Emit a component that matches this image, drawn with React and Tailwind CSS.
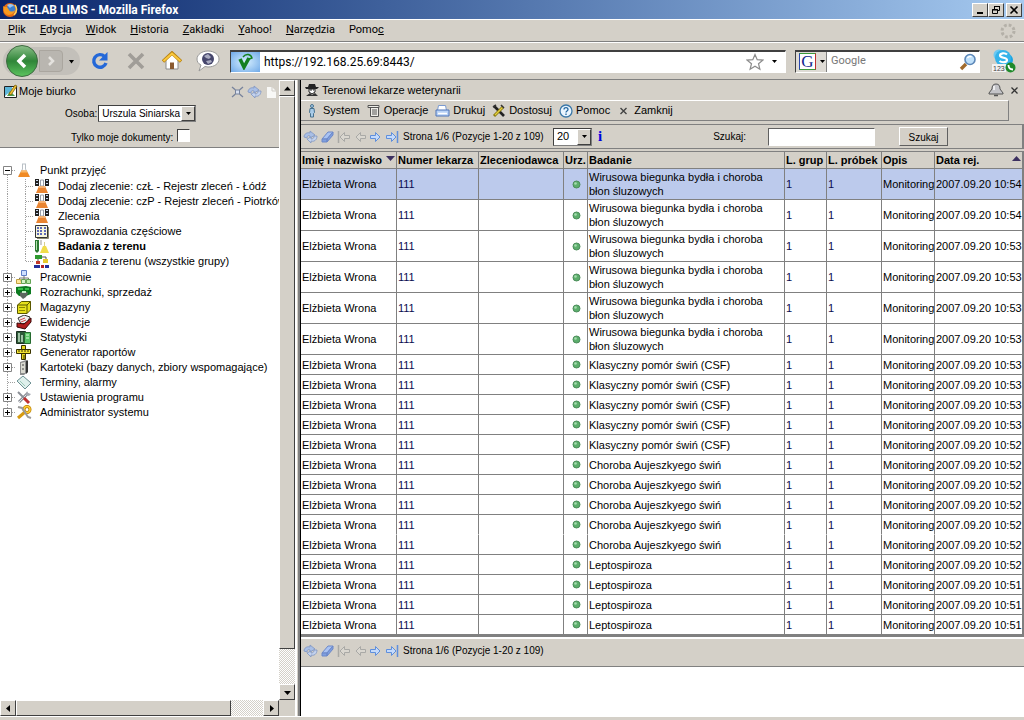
import React from 'react'

const menus = [
  ['P', 'lik'],
  ['E', 'dycja'],
  ['W', 'idok'],
  ['H', 'istoria'],
  ['Z', 'akładki'],
  ['Y', 'ahoo!'],
  ['N', 'arzędzia'],
  ['Pomo', 'c'],
]

const tall = 'Wirusowa biegunka bydła i choroba błon śluzowych'
const csf = 'Klasyczny pomór świń (CSF)'
const auj = 'Choroba Aujeszkyego świń'
const lep = 'Leptospiroza'

const rows = [
  [tall, '10:54'],
  [tall, '10:54'],
  [tall, '10:53'],
  [tall, '10:53'],
  [tall, '10:53'],
  [tall, '10:53'],
  [csf, '10:53'],
  [csf, '10:53'],
  [csf, '10:53'],
  [csf, '10:53'],
  [csf, '10:52'],
  [auj, '10:52'],
  [auj, '10:52'],
  [auj, '10:52'],
  [auj, '10:52'],
  [auj, '10:52'],
  [lep, '10:52'],
  [lep, '10:51'],
  [lep, '10:51'],
  [lep, '10:51'],
]

const raised =
  'border border-t-white border-l-white border-r-[#404040] border-b-[#404040] bg-[#d4d0c8]'
const sunken =
  'border border-t-[#606060] border-l-[#606060] border-r-white border-b-white bg-white'
const dither =
  'bg-[repeating-conic-gradient(#ffffff_0_25%,#d4d0c8_0_50%)] bg-[length:2px_2px]'

function Svg({ w = 16, h = 16, vb, className = '', children }) {
  return (
    <svg
      width={w}
      height={h}
      viewBox={vb || `0 0 ${w} ${h}`}
      className={`block shrink-0 ${className}`}
      fill="none"
      aria-hidden="true"
    >
      {children}
    </svg>
  )
}

function Arrow({ dir = 'down' }) {
  const d = {
    down: 'M0 2h7L3.500 6z',
    up: 'M0 5.500h7L3.500 1.500z',
    left: 'M5 0v7L1 3.500z',
    right: 'M2 0v7l4-3.500z',
  }
  return (
    <Svg w={7} h={7}>
      <path d={d[dir]} fill="#000" />
    </Svg>
  )
}

/* ---------- tree icons ---------- */

function Flask() {
  return (
    <Svg h={15}>
      <path d="M6 1h4M6.500 1v5L3 13M9.500 1v5L13 13" stroke="#b9c0c6" />
      <path d="M5.500 7.500h5L14 14H2z" fill="#f08a24" />
      <path d="M5.500 7.500h5l1 2h-7z" fill="#f9b868" />
    </Svg>
  )
}

function FlaskAdd() {
  return (
    <Svg h={15}>
      <path d="M1 0h4v7H1zM11 0h4v7h-4z" fill="#222" />
      <path d="M2 1h2v1H2zM2 4h2v1H2zM12 1h2v1h-2zM12 4h2v1h-2z" fill="#c9d4ec" />
      <path d="M6.500 1h3v6h-3z" fill="#fff" stroke="#9aa0aa" />
      <path d="M5 7h6l3 7H2z" fill="#e98532" />
      <path d="M5 7h6l1 2H4z" fill="#f6b272" />
    </Svg>
  )
}

function Report() {
  return (
    <Svg h={15}>
      <path d="M1.500 1.500h12v12h-12z" fill="#f6f6dc" stroke="#333" />
      <path
        d="M3 4h2M6 4h2M10 4h2M3 7h2M6 7h2M10 7h2M3 10h2M6 10h2M10 10h2"
        stroke="#2b3cab"
        strokeWidth="1.500"
      />
      <path d="M14.500 3v11.500H3" stroke="#8a8a70" />
    </Svg>
  )
}

function Tubes() {
  return (
    <Svg h={15}>
      <path d="M1 1h4v11l-2 2-2-2z" fill="#2c7a32" />
      <path d="M2 2h1v9H2z" fill="#b5e2b2" />
      <path d="M7 1v5" stroke="#999" />
      <path d="M9 7h3l3 7H6z" fill="#f0dc4a" />
      <path d="M10 3h1v4h-1z" fill="#d9cf8a" />
    </Svg>
  )
}

function Groups() {
  return (
    <Svg h={15}>
      <path d="M1 1h7v4H1z" fill="#2f9a2f" />
      <path d="M8 3h4v3M4 5v4" stroke="#555" />
      <path d="M9 5h5v4H9z" fill="#e8c92c" />
      <path d="M2 7h4v3H2z" fill="#c23a2a" />
      <path d="M0 11h6v3H0z" fill="#23309a" />
      <path d="M7 11h3v3H7z" fill="#b32424" />
      <path d="M11 11h4v3h-4z" fill="#23309a" />
    </Svg>
  )
}

function Labs() {
  return (
    <Svg h={15}>
      <path d="M5.500.5h5v5h-5z" fill="#cfe0ff" stroke="#5f7fc6" />
      <path d="M8 6v3M3.500 10V8h9v2" stroke="#777" />
      <path d="M.5 9.500h4l1.500 4H.5z" fill="#ffe79a" stroke="#c0a040" />
      <path d="M5.500 9.500h4v4h-4z" fill="#d6f3c8" stroke="#65a455" />
      <path d="M10.500 9.500h4v4h-4z" fill="#b8eaa9" stroke="#65a455" />
    </Svg>
  )
}

function Money() {
  return (
    <Svg h={15}>
      <path d="M0 2l10-1 5 1v7l-5 2H3L0 8z" fill="#0c7a20" />
      <path d="M2 3h5v2H2zM9 3h4v2H9z" fill="#35c04a" />
      <path d="M4 8c2-2 6-2 8 0l-2 4-3 2-3-3z" fill="#5c6660" />
      <path d="M6 6h4v2H6z" fill="#bfeec4" />
    </Svg>
  )
}

function Box() {
  return (
    <Svg h={15}>
      <path d="M1.500 5l4-3.500h9v8.500L11 13.500H1.500z" fill="#e6e01c" stroke="#5b5800" />
      <path d="M1.500 5H11v8.500M11 5l3.500-3.500" stroke="#5b5800" />
      <path d="M3 7.500h6M3 10.500h6" stroke="#8d8800" />
    </Svg>
  )
}

function Ledger() {
  return (
    <Svg h={15}>
      <path d="M2 3l6-3 6 2-3 6-6 1z" fill="#eee" stroke="#333" />
      <path d="M1 8l7 1 7-6v4l-6 7-8-2z" fill="#b31d1d" stroke="#3a0808" />
      <path d="M4 5l5-2M5 7l5-2" stroke="#d04848" />
    </Svg>
  )
}

function Stats() {
  return (
    <Svg h={15}>
      <path d="M.5 1.500h9v12h-9z" fill="#2d5a38" stroke="#1c2f22" />
      <path d="M2 3h2v9H2zM5 5h2v7H5z" fill="#9fc2a5" />
      <path d="M8.500 2.500h6v11h-6z" fill="#58c164" stroke="#256a2e" />
      <path d="M10 5h3M10 8h3" stroke="#d8ffd8" />
    </Svg>
  )
}

function Ruler() {
  return (
    <Svg h={15}>
      <path d="M5.500.5h4v14h-4z" fill="#e7d61c" stroke="#3b3500" />
      <path d="M.5 4.500h14v4H.5z" fill="#f1e233" stroke="#3b3500" />
      <path d="M3 5v2M6 5v2M9 5v2M12 5v2M7 11h2M7 13h2" stroke="#3b3500" />
    </Svg>
  )
}

function Cabinet() {
  return (
    <Svg h={15}>
      <path d="M4 2l6-2h2v12l-4 3H4z" fill="#8d8d8d" />
      <path d="M5 3l4-1v11H5z" fill="#d9d9d0" />
      <path d="M10 1h2v11l-2 2z" fill="#333" />
      <path d="M6 5h2M6 9h2" stroke="#444" />
    </Svg>
  )
}

function Calendar() {
  return (
    <Svg h={15}>
      <path d="M1 6l6-5 8 7-6 6z" fill="#dff0ec" stroke="#6c8f92" />
      <path d="M4 6l5 5" stroke="#9cc8b8" />
    </Svg>
  )
}

function Tools() {
  return (
    <Svg h={15}>
      <path d="M3 12L12 3" stroke="#8b8f96" strokeWidth="3" />
      <path d="M3 12L12 3" stroke="#e0e3e8" strokeWidth="1" />
      <path d="M11 1l1 2 3 1-2 2-3-1z" fill="#a4a8b0" />
      <path d="M2 2l6 6" stroke="#8b8f96" strokeWidth="2" />
      <path d="M8 8l5 5" stroke="#c03030" strokeWidth="3" />
    </Svg>
  )
}

function Keys() {
  return (
    <Svg h={15}>
      <circle cx="11" cy="4.500" r="3" stroke="#b57b00" strokeWidth="3" />
      <circle cx="11" cy="4.500" r="3" stroke="#ffcc33" strokeWidth="1.500" />
      <path d="M9 7l-7 6" stroke="#d79a10" strokeWidth="3" />
      <path d="M2 2l4 1 6 9 3 1" stroke="#9a9a9a" strokeWidth="2" />
    </Svg>
  )
}

/* plus/minus box or a plain branch, with the dotted guide behind it */
function Guide({ kind, first, last }) {
  return (
    <Svg h={15}>
      <path
        d={`M7.500 ${first ? 8 : 0}V${last ? 8 : 15}M8 7.500h8`}
        stroke="#a0a0a0"
        strokeDasharray="1 1"
      />
      {kind !== 'leaf' && (
        <>
          <path d="M3.500 3.500h8v8h-8z" fill="#fff" stroke="#848484" />
          <path d={kind === 'open' ? 'M5 7.500h5' : 'M5 7.500h5M7.500 5v5'} stroke="#000" />
        </>
      )}
    </Svg>
  )
}

const reception = [
  ['Dodaj zlecenie: czŁ - Rejestr zleceń - Łódź', FlaskAdd],
  ['Dodaj zlecenie: czP - Rejestr zleceń - Piotrków', FlaskAdd],
  ['Zlecenia', FlaskAdd],
  ['Sprawozdania częściowe', Report],
  ['Badania z terenu', Tubes],
  ['Badania z terenu (wszystkie grupy)', Groups],
]

const branches = [
  ['Pracownie', Labs],
  ['Rozrachunki, sprzedaż', Money],
  ['Magazyny', Box],
  ['Ewidencje', Ledger],
  ['Statystyki', Stats],
  ['Generator raportów', Ruler],
  ['Kartoteki (bazy danych, zbiory wspomagające)', Cabinet],
  ['Terminy, alarmy', Calendar],
  ['Ustawienia programu', Tools],
  ['Administrator systemu', Keys],
]

function Tree() {
  return (
    <ul className="flex-1 overflow-hidden pt-[15px] text-[11px] leading-[15px] whitespace-nowrap">
      <li>
        <a href="#punkt" className="flex">
          <Guide kind="open" first />
          <Flask />
          <span className="ml-2">Punkt przyjęć</span>
        </a>
        <ul className="py-px">
          {reception.map(([label, Icon], i) => (
            <li key={label}>
              <a href="#zlecenia" className="flex">
                <Svg w={34} h={15}>
                  <path
                    d={`M7.500 0v15M25.500 0V${i === 5 ? 8 : 15}M26 7.500h8`}
                    stroke="#a0a0a0"
                    strokeDasharray="1 1"
                  />
                </Svg>
                <Icon />
                <span className={i === 4 ? 'ml-2 font-bold' : 'ml-2'}>{label}</span>
              </a>
            </li>
          ))}
        </ul>
      </li>
      {branches.map(([label, Icon], i) => (
        <li key={label}>
          <a href="#modul" className="flex">
            <Guide kind={i === 7 ? 'leaf' : 'closed'} last={i === 9} />
            <Icon />
            <span className="ml-2">{label}</span>
          </a>
        </li>
      ))}
    </ul>
  )
}

/* ---------- browser chrome ---------- */

function TitleBar() {
  const btn = `flex h-[14px] w-4 items-center justify-center ${raised}`
  return (
    <div className="flex h-[19px] items-center bg-linear-to-r from-[#0a246a] to-[#a6caf0] pr-[2px] pl-[2px] text-white">
      <Svg>
        <circle cx="8" cy="8" r="7" fill="#e66a12" />
        <circle cx="9" cy="7" r="4.500" fill="#3d7fd0" />
        <path d="M5 3c3-2 6-1 7 1-2 0-3 1-4 2z" fill="#9cc7f5" />
        <path d="M1 4c1 1 2 1 4 1l2 3c1 2 4 2 6 0-1 5-8 7-11 2z" fill="#f79a1e" />
        <path d="M13 3c2 3 2 7-1 10" stroke="#ffd15a" strokeWidth="1.500" />
      </Svg>
      <h1 className="ml-[2px] text-[12px] font-bold">CELAB LIMS - Mozilla Firefox</h1>
      <div className="ml-auto flex">
        <button type="button" aria-label="Minimalizuj" className={btn}>
          <Svg w={10} h={10}>
            <path d="M2 8h6" stroke="#000" strokeWidth="2" />
          </Svg>
        </button>
        <button type="button" aria-label="Przywróć" className={btn}>
          <Svg w={10} h={10}>
            <path d="M3.500 4V1.500h5v4H7M3 1.500h6M1.500 4.500h5v4h-5zM1 5h6" stroke="#000" />
          </Svg>
        </button>
        <button type="button" aria-label="Zamknij okno" className={`ml-[2px] ${btn}`}>
          <Svg w={10} h={10}>
            <path d="M1.500 1.500l7 7M8.500 1.500l-7 7" stroke="#000" strokeWidth="1.600" />
          </Svg>
        </button>
      </div>
    </div>
  )
}

function MenuBar() {
  return (
    <nav className="flex h-[23px] items-center gap-[14px] border-t border-b border-t-white border-b-[#808080] px-2 text-[11px]">
      {menus.map(([a, b]) => (
        <button type="button" key={a + b}>
          {a === 'Pomo' ? (
            <>
              {a}
              <u>{b}</u>
            </>
          ) : (
            <>
              <u>{a}</u>
              {b}
            </>
          )}
        </button>
      ))}
      <Svg className="ml-auto">
        <circle
          cx="8"
          cy="8"
          r="6"
          stroke="#b4b0a8"
          strokeWidth="3"
          strokeDasharray="2.700 2.012"
        />
      </Svg>
    </nav>
  )
}

function NavBar() {
  return (
    <div className="flex h-[38px] items-center border-t border-b border-t-white border-b-[#808080] pr-2 pl-[3px]">
      <div className="flex h-7 w-[77px] shrink-0 items-center rounded-full bg-[#c3c0ba]">
        <button type="button" aria-label="Wstecz" className="ml-[2px]">
          <Svg w={34} h={34}>
            <defs>
              <linearGradient id="back" x1="0" y1="0" x2="0" y2="1">
                <stop offset="0" stopColor="#8cc08a" />
                <stop offset="0.500" stopColor="#2f8538" />
                <stop offset="1" stopColor="#5cc45e" />
              </linearGradient>
            </defs>
            <circle cx="17" cy="17" r="15.500" fill="url(#back)" stroke="#3f6b42" />
            <path d="M20 11l-6 6 6 6" stroke="#fff" strokeWidth="3.500" />
          </Svg>
        </button>
        <button
          type="button"
          aria-label="Dalej"
          className="flex h-[22px] w-6 items-center justify-center rounded-r-sm border border-[#aaa69f] bg-[#b9b6b0]"
        >
          <Svg w={12} h={14}>
            <path d="M4 3l4 4-4 4" stroke="#e4e2de" strokeWidth="2.500" />
          </Svg>
        </button>
        <button type="button" aria-label="Historia kart" className="ml-[5px]">
          <Svg w={7} h={7}>
            <path d="M1 2h5L3.500 5.500z" fill="#000" />
          </Svg>
        </button>
      </div>
      <div className="ml-[10px] flex items-center gap-4">
        <button type="button" aria-label="Odśwież">
          <Svg w={20} h={20}>
            <path d="M14.500 5.500A6.300 6.300 0 1 0 16 12" stroke="#2468d8" strokeWidth="3.400" />
            <path d="M17.500 1v8.500H9z" fill="#2468d8" />
          </Svg>
        </button>
        <button type="button" aria-label="Zatrzymaj">
          <Svg w={20} h={20}>
            <path d="M3 3l14 14M17 3L3 17" stroke="#a09d98" strokeWidth="3.600" />
          </Svg>
        </button>
        <button type="button" aria-label="Strona startowa">
          <Svg w={20} h={20}>
            <path d="M4 9l6-6 6 6v9H4z" fill="#fff" stroke="#8c8c8c" />
            <path d="M1 10.500L10 2l9 8.500" stroke="#b98314" strokeWidth="3.400" />
            <path d="M1.500 10L10 2.500l8.500 7.500" stroke="#fbc93d" strokeWidth="2" />
            <path d="M8 11.500h4V18H8z" fill="#8a5a30" />
          </Svg>
        </button>
        <button type="button" aria-label="Komunikator" className="-ml-[2px]">
          <Svg w={24} h={22}>
            <path
              d="M12 1c6 0 11 3.500 11 8s-4.500 8-11 8l-3-.5L3 21l2-6C2 13.500 1 11.500 1 9c0-4.500 5-8 11-8z"
              fill="#fff"
              stroke="#999"
            />
            <circle cx="12" cy="9" r="6" fill="#46466c" />
            <path d="M8 6l4-2 3 3-2 2-3-1zM10 11l5-1 1 2-4 2z" fill="#a8aac0" />
          </Svg>
        </button>
      </div>
      <div className="ml-[10px] flex h-[23px] min-w-0 flex-1 items-center border border-t-2 border-t-[#404040] border-r-white border-b-white border-l-[#404040] bg-white">
        <span className="flex h-full w-[29px] items-center justify-center bg-[radial-gradient(#d8f0ff,#6fa9e8)]">
          <Svg w={16} h={17}>
            <path d="M2 6l4 8 5-9" stroke="#148020" strokeWidth="3.600" />
            <path d="M5 4c3-4 8-3 9 1l-3 1" stroke="#148020" strokeWidth="1.400" />
          </Svg>
        </span>
        <input
          aria-label="Adres"
          defaultValue="https://192.168.25.69:8443/"
          className="min-w-0 flex-1 bg-transparent pl-1 text-[12px] outline-none"
        />
        <button type="button" aria-label="Dodaj do zakładek">
          <Svg w={18} h={18}>
            <path
              d="M9 1.500l2.200 5.200 5.600.4-4.300 3.600 1.400 5.600L9 13.300l-4.900 3 1.400-5.600L1.200 7.100l5.600-.4z"
              fill="#fff"
              stroke="#8c8c8c"
              strokeWidth="1.200"
            />
          </Svg>
        </button>
        <button type="button" aria-label="Ostatnie adresy" className="mx-2">
          <Svg w={5} h={5}>
            <path d="M0 1h5L2.500 4z" fill="#000" />
          </Svg>
        </button>
      </div>
      <div className="ml-[9px] flex h-[23px] w-[185px] shrink-0 items-center border border-t-2 border-t-[#404040] border-r-white border-b-white border-l-[#404040] bg-white">
        <button
          type="button"
          aria-label="Wyszukiwarka"
          className="flex h-full w-[31px] shrink-0 items-center gap-1 border-r border-[#808080] bg-[#dedbd5] pl-[3px]"
        >
          <span className="flex h-[17px] w-[17px] shrink-0 items-center justify-center border border-t-[#3b9a3b] border-r-[#c03030] border-b-[#3b9a3b] border-l-[#2846b0] bg-white font-['Liberation_Serif',serif] text-[17px] leading-none text-[#15278e]">
            G
          </span>
          <Svg w={5} h={5}>
            <path d="M0 1h5L2.500 4z" fill="#000" />
          </Svg>
        </button>
        <input
          aria-label="Szukaj w sieci"
          placeholder="Google"
          className="w-0 flex-1 bg-transparent pl-1 text-[11px] outline-none placeholder:text-[#777]"
        />
        <button type="button" aria-label="Szukaj w Google" className="mr-[2px]">
          <Svg w={18} h={18}>
            <path d="M2 16l5-5" stroke="#a06a2c" strokeWidth="3.400" />
            <circle cx="11" cy="6.500" r="5" fill="#bfe0fa" stroke="#5c87b8" strokeWidth="1.600" />
            <path d="M8.500 5c1-1.500 3-1.800 4-1" stroke="#fff" strokeWidth="1.400" />
          </Svg>
        </button>
      </div>
      <button type="button" aria-label="Skype" className="ml-3">
        <Svg w={24} h={24}>
          <circle cx="7" cy="6" r="5.500" fill="#6cc9f2" />
          <circle cx="15" cy="11" r="6" fill="#1ba5e2" />
          <circle cx="11" cy="9" r="8" fill="#35b3ea" />
          <path
            d="M15 5.500C13 3.500 8 4 8 6.500c0 3 7 1.500 7 4.500 0 2.500-5 3-7.500 1"
            stroke="#fff"
            strokeWidth="2.200"
          />
          <path d="M0 15h14v8H0z" fill="#f2f2f2" />
          <text x="1" y="22" fontSize="7" fontFamily="Liberation Sans, sans-serif" fill="#444">
            123
          </text>
          <circle cx="18.500" cy="18.500" r="5" fill="#1f8a2b" />
          <path d="M16.500 16c0 3 1.500 4.500 4.500 4.500" stroke="#fff" strokeWidth="1.800" />
        </Svg>
      </button>
    </div>
  )
}

/* ---------- shared controls ---------- */

function Select({ id, label, options, className }) {
  return (
    <span className={`relative flex border border-t-[#404040] border-l-[#404040] border-r-[#808080] border-b-[#808080] bg-white ${className}`}>
      <select
        id={id}
        aria-label={label}
        className="w-full appearance-none bg-transparent pl-[3px] leading-[15px] outline-none"
      >
        {options.map((o) => (
          <option key={o}>{o}</option>
        ))}
      </select>
      <span
        className={`pointer-events-none absolute inset-y-0 right-0 flex w-[14px] items-center justify-center ${raised}`}
      >
        <Svg w={7} h={7}>
          <path d="M1 2h5L3.500 5z" fill="#000" />
        </Svg>
      </span>
    </span>
  )
}

function RefreshIcon() {
  return (
    <Svg w={15} h={14}>
      <path d="M1 7c0-3 3-5 6-4V1l5 4-5 3V6C5 5 4 6 4 8z" fill="#a9bfe6" stroke="#7d94c2" strokeWidth=".8" />
      <path d="M14 6c0 4-3 6-6 5v2L4 9l4-2v2c2 0 3-1 3-3z" fill="#c3d2ee" stroke="#7d94c2" strokeWidth=".8" />
    </Svg>
  )
}

function Step({ back, bar, off }) {
  const stroke = off ? '#a9a9a6' : '#5f8fdc'
  return (
    <Svg w={14} h={14}>
      <g transform={back ? 'translate(14 0) scale(-1 1)' : undefined}>
        <path
          d="M1.500 5.500h5v-3L11 7l-4.500 4.500v-3h-5z"
          fill={off ? '#dad7d0' : '#c4dafb'}
          stroke={stroke}
        />
        {bar && <path d="M12.500 1v12" stroke={stroke} strokeWidth="1.500" />}
      </g>
    </Svg>
  )
}

function Pager() {
  return (
    <div className="flex items-center gap-[2px] text-[10px]">
      <button type="button" aria-label="Odśwież listę">
        <RefreshIcon />
      </button>
      <button type="button" aria-label="Wyczyść">
        <Svg w={15} h={14}>
          <path d="M2 9l6-7h5l-6 7z" fill="#a9c3f3" stroke="#6d88c8" />
          <path d="M2 9h5v3H2zM7 9l6-7v3l-6 7z" fill="#7f9fe0" stroke="#6d88c8" />
        </Svg>
      </button>
      <button type="button" aria-label="Pierwsza strona">
        <Step back bar off />
      </button>
      <button type="button" aria-label="Poprzednia strona">
        <Step back off />
      </button>
      <button type="button" aria-label="Następna strona">
        <Step />
      </button>
      <button type="button" aria-label="Ostatnia strona">
        <Step bar />
      </button>
      <span className="ml-[2px] min-w-[150px] whitespace-nowrap">Strona 1/6 (Pozycje 1-20 z 109)</span>
    </div>
  )
}

/* ---------- left pane ---------- */

function Sidebar() {
  const sb = `flex h-4 w-4 shrink-0 items-center justify-center ${raised}`
  return (
    <aside className="flex w-[295px] shrink-0 flex-col">
      <div className="flex flex-1">
        <div className="flex min-w-0 flex-1 flex-col bg-white">
          <div className="h-[68px] border-b border-[#808080] bg-[#d4d0c8] text-[10px]">
            <div className="flex h-[23px] items-center pr-[2px] pl-[3px]">
              <Svg w={15} h={15}>
                <path d="M1.500 2.500h12v11h-12z" fill="#fff" stroke="#222" />
                <path d="M2 3h7v3L2 12z" fill="#5cb5d8" />
                <path d="M4 12l3-5 5 5z" fill="#4d9a4d" />
                <path d="M6 10l6-9 2 1-6 9z" fill="#f1c232" stroke="#6e5200" strokeWidth=".7" />
              </Svg>
              <h2 className="ml-px text-[11px]">Moje biurko</h2>
              <div className="ml-auto flex items-center gap-[3px]">
                <button type="button" aria-label="Zwiń wszystko">
                  <Svg w={13} h={12}>
                    <path
                      d="M1 1l3.500 3M12 1L8.500 4M1 11l3.500-3M12 11L8.500 8"
                      stroke="#77839c"
                      strokeWidth="1.300"
                    />
                    <path d="M4.500 4h4v4h-4z" fill="#d8e0f0" stroke="#77839c" />
                  </Svg>
                </button>
                <button type="button" aria-label="Odśwież biurko">
                  <RefreshIcon />
                </button>
                <button type="button" aria-label="Nowy dokument">
                  <Svg w={12} h={12}>
                    <path d="M2 1h5l4 4v7H2z" fill="#f8f8f6" />
                    <path d="M7 1v4h4" stroke="#cfccc6" />
                  </Svg>
                </button>
              </div>
            </div>
            <div className="flex h-[21px] items-center gap-px pl-[65px]">
              <label htmlFor="osoba">Osoba:</label>
              <Select id="osoba" options={['Urszula Siniarska']} className="h-[17px] w-[98px]" />
            </div>
            <div className="flex h-[23px] items-center gap-1 pl-[71px]">
              <label htmlFor="moje" className="pt-1">
                Tylko moje dokumenty:
              </label>
              <input
                id="moje"
                type="checkbox"
                className="h-[13px] w-[13px] appearance-none border border-t-[#404040] border-r-white border-b-white border-l-[#404040] bg-white"
              />
            </div>
          </div>
          <Tree />
        </div>
        <div className={`flex w-4 flex-col ${dither}`}>
          <button type="button" aria-label="W górę" className={sb}>
            <Arrow dir="up" />
          </button>
          <div className={`flex-[553] ${raised}`} />
          <div className="flex-[35]" />
          <button type="button" aria-label="W dół" className={sb}>
            <Arrow />
          </button>
        </div>
      </div>
      <div className="flex h-4">
        <div className={`flex flex-1 ${dither}`}>
          <button type="button" aria-label="W lewo" className={sb}>
            <Arrow dir="left" />
          </button>
          <div className={`flex-[215] ${raised}`} />
          <div className="flex-[32]" />
          <button type="button" aria-label="W prawo" className={sb}>
            <Arrow dir="right" />
          </button>
        </div>
        <div className="w-4" />
      </div>
    </aside>
  )
}

/* ---------- right pane ---------- */

const actions = [
  {
    label: 'System',
    icon: (
      <Svg w={14} h={14}>
        <circle cx="6" cy="2" r="1.500" fill="#a8cbe8" stroke="#46718f" />
        <path d="M4 4.500h4l.5 4-1 1V13h-3V9.500l-1-1z" fill="#a8cbe8" stroke="#46718f" />
      </Svg>
    ),
  },
  {
    label: 'Operacje',
    icon: (
      <Svg w={14} h={14}>
        <path d="M1 1.500h11v2H1zM3.500 3.500h8v9h-8z" fill="#efeee9" stroke="#555" />
        <path d="M5 6h5M5 8h5M5 10h5" stroke="#555" />
      </Svg>
    ),
  },
  {
    label: 'Drukuj',
    icon: (
      <Svg w={15} h={14}>
        <path d="M3.500 1.500h7l1 5h-9z" fill="#fff" stroke="#7b9bd0" />
        <path d="M1 6h13v6H1z" fill="#b9d2f6" stroke="#4e74b8" />
        <path d="M3 9.500h9" stroke="#fff" strokeWidth="1.500" />
      </Svg>
    ),
  },
  {
    label: 'Dostosuj',
    icon: (
      <Svg w={14} h={14}>
        <path d="M2 2l10 10" stroke="#222" strokeWidth="2.600" />
        <path d="M2 12l9-9" stroke="#8a7a10" strokeWidth="3" />
        <path d="M3 11l8-8" stroke="#e5cf3c" strokeWidth="1.200" />
        <path d="M1 3l3-2M9 1l3 3" stroke="#333" strokeWidth="1.600" />
      </Svg>
    ),
  },
  {
    label: 'Pomoc',
    icon: (
      <Svg w={14} h={14}>
        <circle cx="7" cy="7" r="6" fill="#eaf5ff" stroke="#3b78a8" strokeWidth="1.300" />
        <path d="M5 5.500c0-2.500 4-2.500 4 0 0 1.500-2 1.500-2 3M7 9.500V11" stroke="#2468a0" strokeWidth="1.300" />
      </Svg>
    ),
  },
  {
    label: 'Zamknij',
    icon: (
      <Svg w={14} h={14}>
        <path d="M3.500 4l6 6M9.500 4l-6 6" stroke="#444" strokeWidth="1.400" />
      </Svg>
    ),
  },
]

const columns = [
  ['Imię i nazwisko', 'w-[96px]', 'down'],
  ['Numer lekarza', 'w-[82px]'],
  ['Zleceniodawca', 'w-[85px]'],
  ['Urz.', 'w-[24px]'],
  ['Badanie', ''],
  ['L. grup', 'w-[42px]'],
  ['L. próbek', 'w-[55px]'],
  ['Opis', 'w-[53px]'],
  ['Data rej.', 'w-[87px]', 'up'],
]

function Results() {
  const cell = 'border-r border-b border-[#808080] p-0 pl-px last:border-r-0'
  return (
    <table className="w-full table-fixed border-separate border-spacing-0 border-t border-r-2 border-b-2 border-[#808080] bg-white text-[11px] leading-[14px]">
      <thead className="bg-[#d4d0c8]">
        <tr className="h-[17px]">
          {columns.map(([name, width, sort]) => (
            <th
              key={name}
              scope="col"
              className={`relative text-left font-bold whitespace-nowrap ${cell} ${width}`}
            >
              {name}
              {sort && (
                <Svg w={9} h={6} className="absolute top-1 right-px">
                  <path d={sort === 'up' ? 'M0 5h9L4.500 0z' : 'M0 0h9L4.500 5z'} fill="#3c3060" />
                </Svg>
              )}
            </th>
          ))}
        </tr>
      </thead>
      <tbody>
        {rows.map(([test, time], i) => {
          const line = i === 14 ? `${cell} border-b-white` : cell
          return (
            <tr key={i} className={`${i < 6 ? 'h-[31px]' : 'h-5'} ${i === 0 ? 'bg-[#bccaec]' : ''}`}>
              <td className={line}>Elżbieta Wrona</td>
              <td className={`text-[#0b0b50] ${line}`}>111</td>
              <td className={line} />
              <td className={line}>
                <Svg w={9} h={9} className="mx-auto">
                  <circle cx="4.500" cy="4.500" r="3.500" fill="#5cae6c" stroke="#4b8c5a" />
                  <circle cx="3.500" cy="3.500" r="1.300" fill="#a5dcae" />
                </Svg>
              </td>
              <td className={`pr-4 ${line}`}>{test}</td>
              <td className={`text-[#0b0b50] ${line}`}>1</td>
              <td className={`text-[#0b0b50] ${line}`}>1</td>
              <td className={`whitespace-nowrap ${line}`}>Monitoring</td>
              <td className={`whitespace-nowrap ${line}`}>2007.09.20 {time}</td>
            </tr>
          )
        })}
      </tbody>
    </table>
  )
}

function Workspace() {
  return (
    <main className="flex min-w-0 flex-1 flex-col border-l border-black bg-white">
      <div className="bg-[#d4d0c8]">
        <div className="flex h-5 items-center pr-[5px] pl-[3px] text-[11px]">
          <Svg>
            <path d="M5 2h6l1 3h3l-2 2H2L1 5h3z" fill="#222" />
            <path d="M5 7h6v3l-3 2-3-2z" fill="#fff" stroke="#222" />
            <path d="M6 8h2M9 8h1" stroke="#222" />
            <path d="M2 14l4-3 2 2 3-2 3 3z" fill="#333" />
          </Svg>
          <h2 className="ml-[2px]">Terenowi lekarze weterynarii</h2>
          <button type="button" aria-label="Alarmy" className="ml-auto">
            <Svg>
              <path d="M8 2c3 0 4 2 4 5l3 4v1H1v-1l3-4c0-3 1-5 4-5z" fill="#c4c4c8" stroke="#555" />
              <path d="M6 4v4" stroke="#fff" strokeWidth="1.400" />
              <path d="M6 13.500h4" stroke="#555" strokeWidth="1.500" />
            </Svg>
          </button>
          <button type="button" aria-label="Zamknij panel" className="ml-[6px]">
            <Svg w={9} h={9}>
              <path d="M1.500 1.500l6 6M7.500 1.500l-6 6" stroke="#333" strokeWidth="1.300" />
            </Svg>
          </button>
        </div>
        <div className="mr-[15px] flex h-[21px] items-center gap-[7px] border-t border-r border-b border-t-white border-r-[#808080] border-b-[#808080] pl-[5px] text-[11px]">
          {actions.map((a) => (
            <button type="button" key={a.label} className="flex items-center gap-[3px]">
              {a.icon}
              {a.label}
            </button>
          ))}
        </div>
        <div className="mt-[3px] mb-[2px] flex h-[25px] items-center border-t border-r-2 border-b border-[#808080] pl-[2px] text-[11px]">
          <Pager />
          <Select label="Pozycji na stronie" options={['20', '50', '100']} className="h-[18px] w-[39px]" />
          <button
            type="button"
            aria-label="Informacje"
            className="ml-[6px] font-['Liberation_Serif',serif] text-[15px] leading-none font-bold text-[#0000e0]"
          >
            i
          </button>
          <form className="mr-[74px] ml-auto flex items-center text-[10px]">
            <label htmlFor="szukaj">Szukaj:</label>
            <input id="szukaj" className={`ml-[22px] h-[18px] w-[107px] px-1 ${sunken}`} />
            <button
              type="button"
              className="ml-6 h-[19px] w-[49px] border border-t-white border-r-[#606060] border-b-[#606060] border-l-white pt-px"
            >
              Szukaj
            </button>
          </form>
        </div>
      </div>
      <Results />
      <div className="mt-[2px] flex h-7 items-start border-b border-[#808080] bg-[#d4d0c8] pt-1 pl-[2px]">
        <Pager />
      </div>
    </main>
  )
}

export default function App() {
  return (
    <div className="flex min-h-screen flex-col bg-[#d4d0c8] text-black">
      <header className="font-[Roboto,'Noto_Sans',sans-serif]">
        <TitleBar />
        <MenuBar />
        <NavBar />
      </header>
      <div className="flex flex-1 font-['Liberation_Sans',Arial,sans-serif]">
        <Sidebar />
        <div className="w-[5px] shrink-0 border-r-2 border-l-2 border-r-[#808080] border-l-white" />
        <Workspace />
      </div>
      <footer className="h-1 border-t border-white" />
    </div>
  )
}
